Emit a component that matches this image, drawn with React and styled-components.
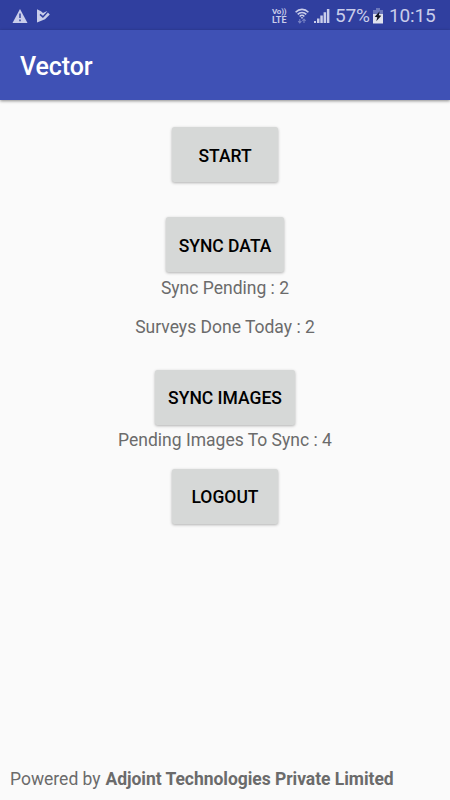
import React from 'react';
import styled, {createGlobalStyle} from 'styled-components';

const GlobalStyle = createGlobalStyle`
	* {
		box-sizing: border-box;
	}
	body {
		margin: 0;
		background: #fafafa;
		font-family: Roboto, sans-serif;
	}
`;

const Screen = styled.div`
	display: flex;
	flex-direction: column;
	width: 450px;
	height: 800px;
	overflow: hidden;
	background: #fafafa;
`;

const StatusBar = styled.div`
	display: flex;
	align-items: center;
	flex: 0 0 30px;
	height: 30px;
	padding: 2px 14px 0 12px;
	background: #303f9f;
	color: #c9cdea;

	svg {
		display: block;
		flex: none;
	}
`;

const Notifications = styled.div`
	display: flex;
	gap: 8px;
	flex: 1;
`;

const Indicators = styled.div`
	display: flex;
	align-items: center;
`;

const Volte = styled.div`
	display: flex;
	flex-direction: column;
	width: 16px;
	margin-right: 7px;
	font-weight: 700;
	line-height: 8px;
	white-space: nowrap;
`;

const VolteLine = styled.span`
	height: 8px;
	font-size: ${props => props.size}px;
	letter-spacing: ${props => props.spacing}px;
`;

const IndicatorIcon = styled.span`
	margin-right: ${props => props.gap}px;
`;

const StatusText = styled.span`
	width: ${props => props.width}px;
	margin-right: ${props => props.gap || 0}px;
	font-size: 19px;
	line-height: 28px;
	letter-spacing: -0.15px;
	white-space: nowrap;
`;

const AppBar = styled.header`
	display: flex;
	align-items: center;
	flex: 0 0 70px;
	padding: 3px 20px 0;
	background: #3f51b5;
	box-shadow: 0 1px 3px rgba(0, 0, 0, 0.45);
	z-index: 1;
`;

const Title = styled.h1`
	margin: 0;
	color: #fff;
	font-size: 25px;
	font-weight: 500;
	line-height: 31px;
	letter-spacing: -0.1px;
`;

const Content = styled.main`
	display: flex;
	flex-direction: column;
	align-items: center;
	flex: 1;
	padding-top: 27px;
`;

const Button = styled.button`
	flex: none;
	width: ${props => props.width}px;
	height: 55px;
	margin: ${props => props.top || 0}px 0 0;
	padding: ${props => props.inset}px 0 0;
	border: none;
	border-radius: 2.5px;
	background: #d6d8d7;
	box-shadow: 0 1px 3px rgba(0, 0, 0, 0.3);
	color: #000;
	font-family: inherit;
	font-size: 17.5px;
	font-weight: 500;
	line-height: 20px;
`;

const Label = styled.p`
	margin: ${props => props.top}px 0 0;
	color: #6b6b6b;
	font-size: 17.5px;
	line-height: 23px;
	white-space: nowrap;
`;

const Footer = styled.footer`
	flex: none;
	padding: 0 10px 9px;
	color: #6b6b6b;
	font-size: 17.5px;
	line-height: 23px;
	white-space: nowrap;

	b {
		margin-left: 0.5px;
		letter-spacing: -0.04px;
	}
`;

const WarningIcon = () => (
	<svg width="16" height="16" viewBox="0 0 16 16">
		<path d="M8 1 15.5 15H.5Z" fill="currentColor" />
		<path d="M7.1 5.5h1.8v4.6H7.1zM7.1 11.4h1.8v1.8H7.1z" fill="#4c5aab" />
	</svg>
);

const PlayCheckIcon = () => (
	<svg width="15" height="16" viewBox="0 0 15 16">
		<path d="M1 1.2 5 3.3l2 1.6 3.6-1.6 3.2 3.2L9 11.2 1 14.6Z" fill="currentColor" />
		<path d="m4 6.4 2.9 2.5 4.6-4.8" fill="none" stroke="#303f9f" strokeWidth="1.5" />
	</svg>
);

const WifiIcon = () => (
	<svg width="14" height="16" viewBox="0 0 14 16">
		<g fill="none" stroke="currentColor" strokeWidth="1.6">
			<path d="M.6 4.2C4.2.4 9.8.4 13.4 4.2" />
			<path d="M2.7 6.4c2.4-2.6 6.2-2.6 8.6 0" />
			<path d="M4.7 8.4c1.3-1.5 3.3-1.5 4.6 0" />
		</g>
		<path d="M5.6 9.3h2.8L7 11Z" fill="currentColor" />
		<path d="M4.8 11v4M3.2 13.2l1.6 1.8 1.6-1.8M9 15v-4M7.4 12.8 9 11l1.6 1.8" fill="none" stroke="#7782c4" strokeWidth="1.1" />
	</svg>
);

const SignalIcon = () => (
	<svg width="16" height="16" viewBox="0 0 16 16">
		<path d="M0 13h2v2H0zM3 10.6h2.5V15H3zM6.3 7.6h2.5V15H6.3zM9.6 4.3h2.5V15H9.6zM12.9 1h2.5v14h-2.5z" fill="currentColor" />
	</svg>
);

const BatteryIcon = () => (
	<svg width="10" height="16" viewBox="0 0 10 16">
		<path d="M3 0h4v2h3v4H0V2h3z" fill="#6c78bb" />
		<path d="M0 6h10v9.5H0z" fill="#e0e2ee" />
		<path d="M6.7 3.2 1.7 8.7l2.6.6-1 4 5-5.6-2.5-.5Z" fill="#111522" />
	</svg>
);

const actions = [
	{label: 'START', width: 106, inset: 3},
	{label: 'SYNC DATA', width: 118, top: 35, inset: 3, notes: [
		{text: 'Sync Pending : 2', top: 5},
		{text: 'Surveys Done Today : 2', top: 16},
	]},
	{label: 'SYNC IMAGES', width: 140, top: 31, inset: 1, notes: [
		{text: 'Pending Images To Sync : 4', top: 4},
	]},
	{label: 'LOGOUT', width: 106, top: 17, inset: 1},
];

const App = () => {
	return (
		<Screen>
			<GlobalStyle />
			<StatusBar>
				<Notifications>
					<WarningIcon />
					<PlayCheckIcon />
				</Notifications>
				<Indicators>
					<Volte>
						<VolteLine size={8} spacing={-0.2}>Vo))</VolteLine>
						<VolteLine size={9} spacing={0}>LTE</VolteLine>
					</Volte>
					<IndicatorIcon gap={5}><WifiIcon /></IndicatorIcon>
					<IndicatorIcon gap={5}><SignalIcon /></IndicatorIcon>
					<StatusText width={35} gap={3}>57%</StatusText>
					<IndicatorIcon gap={6}><BatteryIcon /></IndicatorIcon>
					<StatusText width={47}>10:15</StatusText>
				</Indicators>
			</StatusBar>
			<AppBar>
				<Title>Vector</Title>
			</AppBar>
			<Content>
				{actions.map((action) => (
					<React.Fragment key={action.label}>
						<Button width={action.width} top={action.top} inset={action.inset}>
							{action.label}
						</Button>
						{(action.notes || []).map((note) => (
							<Label key={note.text} top={note.top}>{note.text}</Label>
						))}
					</React.Fragment>
				))}
			</Content>
			<Footer>Powered by <b>Adjoint Technologies Private Limited</b></Footer>
		</Screen>
	);
};

export default App;
